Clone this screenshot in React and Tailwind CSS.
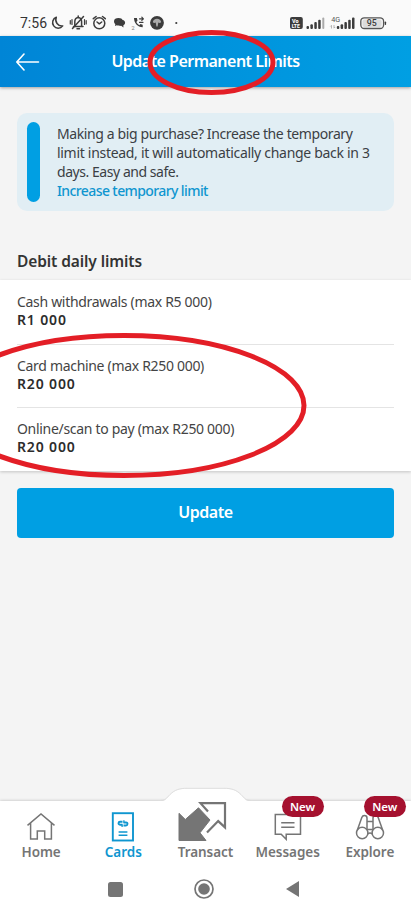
const limits = [
  { label: "Cash withdrawals (max R5 000)", value: "R1 000" },
  { label: "Card machine (max R250 000)", value: "R20 000" },
  { label: "Online/scan to pay (max R250 000)", value: "R20 000" },
];

function StatusIcons() {
  return (
    <svg width="130" height="20" viewBox="50 13 130 20" fill="none" stroke="#3c3c3c" strokeWidth="1.5" strokeLinecap="round" strokeLinejoin="round">
      <path d="M56.3 17.3a5.6 5.6 0 1 0 6.4 8.6a6.2 6.2 0 0 1-6.4-8.6z" />
      <path d="M73.5 26.5h9.5M74.8 26v-4.2c0-2.4 1.2-4 3.4-4.3c2.2.3 3.4 1.9 3.4 4.3v4.2M77 28.8h2.5M78.2 16v1.2" />
      <path d="M72.5 28.5l11-12" />
      <path d="M70.3 20.5v3.4M72 19.5v5M84.5 19.5v5M86.2 20.5v3.4" strokeWidth="1.2" />
      <circle cx="99.3" cy="23.3" r="5.5" />
      <path d="M97 22l2.3 1.8l2.4-1.8M93.3 18.7l2.8-2.2M105.3 18.7l-2.8-2.2" />
      <path d="M114 21.300c0-2.200 2-3.300 4.500-3.300c2.300 0 3.700.8 4.100 1.900c1.600.2 2.500 1.300 2.500 2.700c0 1.300-.7 2.200-1.700 2.700v2.200l-2.200-1.700c-1 .2-1.800 0-2.300-.3c-.9.1-1.500 0-2.100-.2l-1.800.8l.3-1.900c-.8-.7-1.300-1.700-1.300-2.900z" fill="#3c3c3c" stroke="none" />
      <path d="M134 18c0 5 3.500 9 8.700 9.300v-2.500l-2.200-.7l-1.200 1.200c-1.400-.8-2.400-1.900-3-3.300l1.200-1.200l-.6-2.800z" fill="#3c3c3c" stroke="none" />
      <path d="M139.500 18.800h3.600M141.800 17.200l1.600 1.600l-1.600 1.600M139.500 22.300h3.500" strokeWidth="1.200" />
      <text x="131.500" y="30" fontSize="5.500" fill="#777" stroke="none" fontFamily="Roboto, sans-serif">2</text>
      <circle cx="157" cy="22.800" r="6.900" fill="#3c3c3c" stroke="none" />
      <path d="M152.800 22.300c.3-2.200 2-3.600 4.200-3.600s3.900 1.400 4.200 3.600c-1 .9-2 .9-2.900.3l-.7 4h-1.200l-.7-4c-.9.6-1.900.6-2.900-.3z" fill="#aaa" stroke="none" />
      <circle cx="176.300" cy="23" r="1.100" fill="#3c3c3c" stroke="none" />
    </svg>
  );
}

function SignalIcons() {
  return (
    <svg width="98" height="20" viewBox="289 13 98 20" fill="#3c3c3c" fontFamily="Roboto, sans-serif">
      <rect x="290" y="17" width="12.800" height="12" rx="2" />
      <text x="292" y="22.800" fontSize="5.500" fontWeight="800" fill="#fff">Vo</text>
      <text x="291.700" y="27.900" fontSize="5" fontWeight="800" fill="#fff">LTE</text>
      <rect x="306.500" y="26" width="2.500" height="3" rx="1" />
      <rect x="310.400" y="24.300" width="2.500" height="4.700" rx="1" />
      <rect x="314.300" y="22" width="2.500" height="7" rx="1" />
      <rect x="318.200" y="19.800" width="2.500" height="9.200" rx="1" />
      <rect x="322.300" y="17.500" width="2" height="11.500" rx="1" fill="#aaa" />
      <text x="331.300" y="21.500" fontSize="7.200" fill="#555">4G</text>
      <path d="M331.500 25.500v3M330.300 26.500l1.200-1.200M334 25v3M335.200 27l-1.200 1.200" stroke="#999" strokeWidth=".7" />
      <rect x="336.800" y="26" width="2.500" height="3" rx="1" />
      <rect x="340.600" y="24.300" width="2.500" height="4.700" rx="1" />
      <rect x="344.400" y="22" width="2.500" height="7" rx="1" />
      <rect x="348.200" y="19.800" width="2.500" height="9.200" rx="1" />
      <rect x="352" y="17.500" width="2.500" height="11.500" rx="1" />
      <rect x="360.800" y="17.800" width="22.800" height="10.700" rx="3.500" fill="#f4f4f4" stroke="#555" strokeWidth="1.300" />
      <rect x="362.500" y="19.400" width="19" height="7.500" rx="2" fill="#dcdcdc" />
      <rect x="384.700" y="21.500" width="1.400" height="3.500" rx=".7" />
      <text x="371.800" y="26.300" fontSize="8.800" fontWeight="500" textAnchor="middle">95</text>
    </svg>
  );
}

function HomeIcon() {
  return (
    <svg width="30" height="28" viewBox="0 0 30 28" fill="none" stroke="#757575" strokeWidth="1.500">
      <path d="M1.500 12.300L15 1L28.500 12.300M4.600 10v16h6.700v-8h7.400v8h6.700V10" />
    </svg>
  );
}

function CardsIcon() {
  return (
    <svg width="24" height="30" viewBox="0 0 24 30" fill="none" stroke="#0f96d0" strokeWidth="1.500">
      <rect x="1.800" y="1.200" width="20.200" height="27.300" strokeWidth="1.900" />
      <path d="M7.600 20h8.800M7.600 23.200h8.800" />
      <path d="M11.500 9.700H9C7.300 9.700 6.800 12.700 9 12.700h2.500M12.500 13.500H15c1.700 0 2.200-3 0-3h-2.500" strokeWidth="1.900" />
      <path d="M12.900 8.300v2.500M11.100 12.400v2.500" strokeWidth="1.300" />
    </svg>
  );
}

function TransactIcon() {
  return (
    <svg width="50" height="42" viewBox="0 0 50 42">
      <path d="M2 13.300L8.300 19.500L21.500 7.800L33 20L23 32.800L29 40.500H2z" fill="#757575" stroke="#757575" strokeLinejoin="round" />
      <path d="M31 11.500L23.500 3.200H48V27.400L41.200 21.100L30 32.500" fill="none" stroke="#757575" strokeWidth="2.200" />
    </svg>
  );
}

function MessagesIcon() {
  return (
    <svg width="28" height="28" viewBox="0 0 28 28" fill="none" stroke="#757575" strokeWidth="1.500">
      <path d="M1.300 1.500H26.500V21.300H12.200V26.300L7.200 21.300H1.300z" />
      <path d="M7.200 9.700h13.300M7.200 14.200h13.300" />
    </svg>
  );
}

function ExploreIcon() {
  return (
    <svg width="30" height="28" viewBox="0 0 30 28" fill="none" stroke="#757575" strokeWidth="1.500">
      <circle cx="7.200" cy="20" r="5.700" />
      <circle cx="22.800" cy="20" r="5.700" />
      <path d="M2.200 17.500L6.800 4.500c.5-1.300 1.300-2 2.600-2s2.600.9 2.600 2.400V17M27.800 17.500L23.200 4.500c-.5-1.300-1.300-2-2.600-2s-2.600.9-2.600 2.400V17M12 8.500h6M12 16.500h6" />
      <path d="M12.700 21c1.500-1.200 3.100-1.200 4.600 0" />
    </svg>
  );
}

function Tab({ icon, label, active, badge }) {
  return (
    <div className={`relative flex w-[82.200px] flex-col items-center ${active ? "text-[#0f96d0]" : "text-[#757575]"}`}>
      <div className="flex h-[42px] items-end">{icon}</div>
      <div className="text-[13.500px] leading-[18px] font-semibold tracking-[-0.050px] whitespace-nowrap">{label}</div>
      {badge && (
        <span className="absolute -top-[5px] left-[35px] flex h-[21px] w-[42px] items-center justify-center rounded-full bg-[#a5112f] text-[11.500px] font-semibold text-white">
          {badge}
        </span>
      )}
    </div>
  );
}

export default function App() {
  return (
    <div className="relative flex h-[914px] w-[411px] flex-col overflow-hidden bg-[#f4f4f4] font-['Noto_Sans',sans-serif] text-[#3b4044]">
      <div className="flex h-9 shrink-0 items-end justify-between bg-[#fafafa] pr-6 pb-[3px] pl-5">
        <div className="flex items-center">
          <span className="w-[30px] font-[Roboto,sans-serif] text-[14px] leading-5 whitespace-nowrap text-[#333]">7:56</span>
          <StatusIcons />
        </div>
        <SignalIcons />
      </div>

      <header className="flex h-[51px] shrink-0 items-center bg-linear-to-r from-[#0085d6] to-[#009fe3] px-4 shadow-[0_1px_3px_rgba(0,0,0,0.35)]">
        <svg width="24" height="18" viewBox="0 0 24 18" fill="none" stroke="white" strokeWidth="1.600" strokeLinecap="round" strokeLinejoin="round">
          <path d="M22.500 9H0.800M8 1L0.800 9L8 17" />
        </svg>
        <h1 className="flex-1 pr-6 pb-[2px] text-center text-[16px] font-semibold tracking-[-0.520px] text-white">Update Permanent Limits</h1>
      </header>

      <section className="mx-[17px] mt-[26px] flex h-[98px] shrink-0 gap-[17px] rounded-[10px] bg-[#e1eef4] py-[9px] pl-[10px]">
        <div className="w-[13px] shrink-0 rounded-full bg-[#009fe3]" />
        <div className="pt-[3px] text-[14px] leading-[18.900px] whitespace-nowrap">
          <p className="tracking-[-0.390px]">Making a big purchase? Increase the temporary</p>
          <p className="tracking-[-0.300px]">limit instead, it will automatically change back in 3</p>
          <p className="tracking-[-0.450px]">days. Easy and safe.</p>
          <p className="font-medium tracking-[-0.600px] text-[#0f96d0]">Increase temporary limit</p>
        </div>
      </section>

      <h2 className="mt-[39px] h-[30px] shrink-0 pl-[17px] text-[15.500px] leading-[22px] font-semibold tracking-[-0.100px] text-[#333]">Debit daily limits</h2>

      <section className="shrink-0 bg-white pl-[17px] shadow-[0_1px_3px_rgba(0,0,0,0.2)]">
        {limits.map((limit, i) => (
          <div key={limit.label} className={`mr-[17px] h-[63.500px] ${i ? "border-t border-[#e4e4e4] pt-[12px]" : "pt-[13px]"}`}>
            <div className="text-[14px] leading-[18px] tracking-[-0.310px] text-[#444]">{limit.label}</div>
            <div className="text-[14px] leading-[18px] font-semibold tracking-[0.850px] text-[#2c2c2c]">{limit.value}</div>
          </div>
        ))}
      </section>

      <button className="mx-[17px] mt-[17px] h-[50px] shrink-0 rounded-[4px] bg-[#009fe3] pb-[2px] text-[16px] font-semibold tracking-[-0.450px] text-white">
        Update
      </button>

      <footer className="relative mt-auto h-[113px] shrink-0 bg-white shadow-[0_0_3px_rgba(0,0,0,0.25)]">
        <svg className="absolute -top-[14px] left-[158px]" width="95" height="16" viewBox="0 0 95 16">
          <path d="M0 14.500C8 14.500 8 12 12 8C17 3 22 1.800 29 1.800H66C73 1.800 78 3 83 8C87 12 87 14.500 95 14.500V16H0z" fill="white" />
          <path d="M0 13.500C8 13.500 8 11.500 12 7.500C17 2.500 22 1.300 29 1.300H66C73 1.300 78 2.500 83 7.500C87 11.500 87 13.500 95 13.500" fill="none" stroke="#dedede" />
        </svg>
        <nav className="relative flex">
          <Tab icon={<div className="pb-[2px]"><HomeIcon /></div>} label="Home" />
          <Tab icon={<div className="pb-px"><CardsIcon /></div>} label="Cards" active />
          <Tab icon={<div className="-ml-[6px] pb-px"><TransactIcon /></div>} label="Transact" />
          <Tab icon={<div className="pb-[2px]"><MessagesIcon /></div>} label="Messages" badge="New" />
          <Tab icon={<div className="pb-[2px]"><ExploreIcon /></div>} label="Explore" badge="New" />
        </nav>
        <div className="mt-[18px] flex items-center pl-[108px]">
          <div className="size-[15px] rounded-[2.500px] bg-[#757575]" />
          <svg className="ml-[71px]" width="20" height="20" viewBox="0 0 20 20">
            <circle cx="10" cy="10" r="9" fill="none" stroke="#757575" strokeWidth="1.700" />
            <circle cx="10" cy="10" r="5.800" fill="#757575" />
          </svg>
          <svg className="ml-[71px]" width="15" height="18" viewBox="0 0 15 18">
            <path d="M1 9L14 1V17z" fill="#757575" />
          </svg>
        </div>
      </footer>

      <svg className="pointer-events-none absolute inset-0" width="411" height="914" fill="none" stroke="#e31e26" strokeWidth="5">
        <ellipse cx="211.500" cy="62.500" rx="61.500" ry="30" />
        <ellipse cx="124" cy="405.500" rx="180" ry="70" />
      </svg>
    </div>
  );
}
